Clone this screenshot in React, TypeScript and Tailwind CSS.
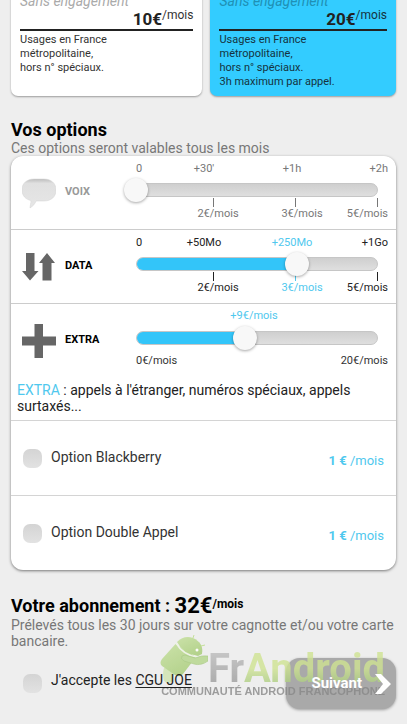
import { useState, type ReactNode } from "react";

type Step = { label: string; price?: string };

const voiceSteps: Step[] = [
  { label: "0" },
  { label: "+30'", price: "2€/mois" },
  { label: "+1h", price: "3€/mois" },
  { label: "+2h", price: "5€/mois" },
];

const dataSteps: Step[] = [
  { label: "0" },
  { label: "+50Mo", price: "2€/mois" },
  { label: "+250Mo", price: "3€/mois" },
  { label: "+1Go", price: "5€/mois" },
];

function VoiceIcon() {
  return (
    <svg viewBox="0 0 34 34" className="h-[34px] w-[34px]" aria-hidden="true">
      <defs>
        <linearGradient id="bubble" x1="0" y1="0" x2="0" y2="1">
          <stop offset="0" stopColor="#bdbdbd" />
          <stop offset="0.15" stopColor="#e0e0e0" />
          <stop offset="1" stopColor="#e6e6e6" />
        </linearGradient>
      </defs>
      <path
        d="M12 3h10c7 0 12 4 12 11s-5 11-12 11h-8c-1 3-3 5-6 7 0-2 1-5 1-7.500C4 23.500 0 20 0 14 0 7 5 3 12 3z"
        fill="url(#bubble)"
        stroke="#d2d2d2"
        strokeWidth="0.500"
      />
    </svg>
  );
}

function DataIcon() {
  return (
    <svg viewBox="0 0 34 34" className="h-[34px] w-[34px]" fill="#666" aria-hidden="true">
      <path d="M4 3h8.500v18h4L8 30.500 0 21h4z" />
      <path d="M20.500 30.500h9V13H33L25 3l-8 10h3.500z" />
    </svg>
  );
}

function PlusIcon() {
  return (
    <svg viewBox="0 0 34 34" className="h-[34px] w-[34px]" fill="#666" aria-hidden="true">
      <path d="M12.500 0h8.500v12.500h13v9H21V34h-8.500V21.500H0v-9h12.500z" />
    </svg>
  );
}

function Slider({
  id,
  value,
  max,
  onChange,
}: {
  id: string;
  value: number;
  max: number;
  onChange: (value: number) => void;
}) {
  return (
    <div className="mr-[10px] grid items-center">
      <div className="col-start-1 row-start-1 h-[14px] overflow-hidden rounded-full border border-[#c6c6c6] bg-linear-to-b from-[#cfcfcf] to-[#dfdfdf]">
        <div className="h-full bg-[#33c5f9]" style={{ width: `${(value / max) * 100}%` }} />
      </div>
      <input
        id={id}
        type="range"
        min={0}
        max={max}
        value={value}
        onChange={(e) => onChange(Number(e.target.value))}
        className="relative z-10 col-start-1 row-start-1 -mx-3 -my-[5px] h-6 cursor-pointer appearance-none bg-transparent [&::-webkit-slider-thumb]:h-6 [&::-webkit-slider-thumb]:w-6 [&::-webkit-slider-thumb]:appearance-none [&::-webkit-slider-thumb]:rounded-full [&::-webkit-slider-thumb]:bg-[#f8f8f8] [&::-webkit-slider-thumb]:shadow-[0_1px_3px_rgba(0,0,0,0.35)]"
      />
    </div>
  );
}

function OptionRow({
  id,
  name,
  icon,
  muted,
  children,
}: {
  id: string;
  name: string;
  icon: ReactNode;
  muted?: boolean;
  children: ReactNode;
}) {
  return (
    <div className="flex pr-2 pl-[11px]">
      <div className="flex h-[73px] w-[43px] items-center">{icon}</div>
      <label
        htmlFor={id}
        className={`flex h-[73px] w-[71px] items-center text-[11px] font-bold ${muted ? "text-[#999]" : "text-black"}`}
      >
        {name}
      </label>
      <div className="min-w-0 flex-1 text-[11px] leading-[14px]">{children}</div>
    </div>
  );
}

function StepSlider({ id, steps, muted }: { id: string; steps: Step[]; muted?: boolean }) {
  const [value, setValue] = useState(muted ? 0 : 2);
  const base = muted ? "text-[#777]" : "text-[#222]";
  const tone = (i: number) => (!muted && i === value ? "text-[#4fc8ee]" : base);
  return (
    <>
      <div className="grid grid-cols-[24fr_88fr_88fr_52fr] pt-[6px] pb-[7px]">
        {steps.map((s, i) => (
          <span
            key={s.label}
            className={`flex ${i === 0 ? "justify-start" : i === 3 ? "justify-end" : "justify-center"} ${tone(i)}`}
          >
            {s.label}
          </span>
        ))}
      </div>
      <Slider id={id} value={value} max={3} onChange={setValue} />
      <div className="mt-px grid grid-cols-[78fr_82fr_82fr_10fr]" aria-hidden="true">
        {[1, 2, 3].map((i) => (
          <span key={i} className={`flex h-[9px] justify-end ${tone(i)}`}>
            <span className="w-px bg-current" />
          </span>
        ))}
      </div>
      <div className="grid grid-cols-[40fr_84fr_84fr_44fr]">
        <span />
        {steps.slice(1).map((s, i) => (
          <span key={s.label} className={`flex ${i === 2 ? "justify-end" : "justify-center"} ${tone(i + 1)}`}>
            {s.price}
          </span>
        ))}
      </div>
    </>
  );
}

function ExtraSlider({ id }: { id: string }) {
  const [value, setValue] = useState(9);
  return (
    <>
      <p className="pt-[5px] pr-4 pb-2 text-center text-[#4fc8ee]">+{value}€/mois</p>
      <Slider id={id} value={value} max={20} onChange={setValue} />
      <div className="mt-[9px] flex justify-between text-[#333]">
        <span>0€/mois</span>
        <span>20€/mois</span>
      </div>
    </>
  );
}

const tick =
  "h-[19px] w-[19px] shrink-0 appearance-none rounded-[7px] bg-linear-to-b from-[#d4d4d4] to-[#e2e2e2] checked:from-[#33c5f9] checked:to-[#33c5f9]";

function CheckRow({ name }: { name: string }) {
  return (
    <div className="flex h-[75px] items-center border-t border-[#d4d4d4] pr-3 pl-3">
      <label className="flex flex-1 items-center gap-[9px] text-[14px] leading-4 text-[#333]">
        <input type="checkbox" className={tick} />
        <span className="pb-[3px]">{name}</span>
      </label>
      <span className="pt-[6px] text-[13px] text-[#4fc8ee]">
        <b>1 €</b> /mois
      </span>
    </div>
  );
}

function Plan({ price, lines, active }: { price: string; lines: string[]; active?: boolean }) {
  return (
    <article
      className={`rounded-b-[7px] px-[9px] pb-2 shadow-[0_1px_2px_rgba(0,0,0,0.35)] ${active ? "bg-[#33ccff] text-[#15333e]" : "bg-white text-[#333]"}`}
    >
      <p className={`text-[14px] leading-[22px] italic ${active ? "text-[#2090b5]" : "text-[#aaa]"}`}>
        Sans engagement
      </p>
      <p className="flex h-[19px] items-start justify-end border-b-2 border-[#222]">
        <b className="text-[17px] leading-[14px] text-[#222]">{price}</b>
        <span className="text-[12px] leading-[6px]">/mois</span>
      </p>
      <ul className="h-[57px] pt-[2px] text-[11px] leading-[14px]">
        {lines.map((l) => (
          <li key={l}>{l}</li>
        ))}
      </ul>
    </article>
  );
}

function Watermark() {
  return (
    <div
      className="pointer-events-none absolute right-[22px] bottom-[27px] flex flex-col items-end opacity-80"
      aria-hidden="true"
    >
      <div className="flex items-end">
        <svg viewBox="0 0 52 50" className="h-[50px] w-[52px]">
          <defs>
            <linearGradient id="droid" x1="0" y1="0" x2="0.600" y2="1">
              <stop offset="0" stopColor="#c3df98" />
              <stop offset="1" stopColor="#a6cc74" />
            </linearGradient>
          </defs>
          <path d="M8 33q6-3 10 3l-1 10q-5 4-9 0-2-7 0-13z" fill="#cfe3ae" />
          <path d="M19.500 9 40 22 27 39q-3 4-8 1L6 31q-3-3 0-7z" fill="url(#droid)" />
          <path d="M21 7Q28 0 37 3q11 5 9 16l-4 2Q27 19 21 7z" fill="url(#droid)" />
          <path d="M20 8q7 12 21 14" fill="none" stroke="#eef4e4" strokeWidth="1.500" />
          <path
            d="M26 21q3-2 6 0l7 2q7-3 13-2v5q-7 5-14 3l-10-3q-4-2-2-5z"
            fill="#b4d68a"
            stroke="#98bf6c"
            strokeWidth="0.600"
          />
          <path d="m37 3 1-3M45 11l4-1" stroke="#b9dc83" strokeWidth="1" />
          <circle cx="41" cy="15" r="1.500" fill="#fff" />
        </svg>
        <p className="text-[40px] leading-[32px] font-bold">
          <span className="bg-linear-to-b from-[#c4c4c4] to-[#949494] bg-clip-text text-transparent">Fr</span>
          <span className="bg-linear-to-b from-[#cfe392] from-50% to-[#98c07a] bg-clip-text text-transparent">
            Android
          </span>
        </p>
      </div>
      <p className="font-['Liberation_Sans'] text-[11px] leading-[12px] font-bold text-[#888]">
        COMMUNAUTÉ ANDROID FRANCOPHONE
      </p>
    </div>
  );
}

export default function App() {
  return (
    <main className="relative overflow-hidden bg-[#eee] px-[11px] pb-[15px] font-['Roboto',sans-serif]">
      <section className="-mt-[10px] grid grid-cols-[192fr_186fr] gap-2">
        <Plan price="10€" lines={["Usages en France", "métropolitaine,", "hors n° spéciaux."]} />
        <Plan
          active
          price="20€"
          lines={["Usages en France", "métropolitaine,", "hors n° spéciaux.", "3h maximum par appel."]}
        />
      </section>

      <h2 className="mt-6 text-[18px] leading-5 font-bold text-black">Vos options</h2>
      <p className="text-[14px] leading-4 text-[#777]">Ces options seront valables tous les mois</p>

      <section className="rounded-[12px] bg-white shadow-[0_1px_3px_rgba(0,0,0,0.5)]">
        <OptionRow id="voix" name="VOIX" icon={<VoiceIcon />} muted>
          <StepSlider id="voix" steps={voiceSteps} muted />
        </OptionRow>
        <div className="border-t border-[#ccc]">
          <OptionRow id="data" name="DATA" icon={<DataIcon />}>
            <StepSlider id="data" steps={dataSteps} />
          </OptionRow>
        </div>
        <div className="border-t border-[#ccc] pb-[6px]">
          <OptionRow id="extra" name="EXTRA" icon={<PlusIcon />}>
            <ExtraSlider id="extra" />
          </OptionRow>
          <p className="mt-[5px] pr-8 pl-[6px] text-[14px] leading-4 text-[#222]">
            <span className="text-[#4fc8ee]">EXTRA</span> : appels à l'étranger, numéros spéciaux, appels surtaxés...
          </p>
        </div>
        <CheckRow name="Option Blackberry" />
        <CheckRow name="Option Double Appel" />
      </section>

      <h2 className="mt-[25px] flex items-start text-[18px] leading-[22px] font-bold text-black">
        <span>Votre abonnement :&nbsp;</span>
        <span className="text-[22px]">32€</span>
        <span className="text-[12px] leading-[18px]">/mois</span>
      </h2>
      <p className="text-[14px] leading-4 text-[#777]">
        Prélevés tous les 30 jours sur votre cagnotte et/ou votre carte bancaire.
      </p>

      <div className="mt-[9px] flex items-center justify-between pl-3">
        <label className="flex items-center gap-[9px] text-[14px] leading-4 text-[#222]">
          <input type="checkbox" className={tick} />
          <span className="relative z-10 pb-2">
            J'accepte les{" "}
            <a href="#cgu" className="underline underline-offset-2">
              CGU JOE
            </a>
          </span>
        </label>
        <button
          type="button"
          className="flex h-[51px] w-[110px] items-center justify-end gap-[13px] rounded-[14px] bg-[#a9a9a9] pr-[5px] text-[15px] font-bold text-white shadow-[0_1px_3px_rgba(0,0,0,0.35)]"
        >
          <span className="relative z-10">Suivant</span>
          <svg viewBox="0 0 16 22" className="relative z-10 h-[22px] w-4" fill="#fff" aria-hidden="true">
            <path d="M0 1h6l10 10L6 21H0l8-10z" />
          </svg>
        </button>
      </div>
      <Watermark />
    </main>
  );
}
